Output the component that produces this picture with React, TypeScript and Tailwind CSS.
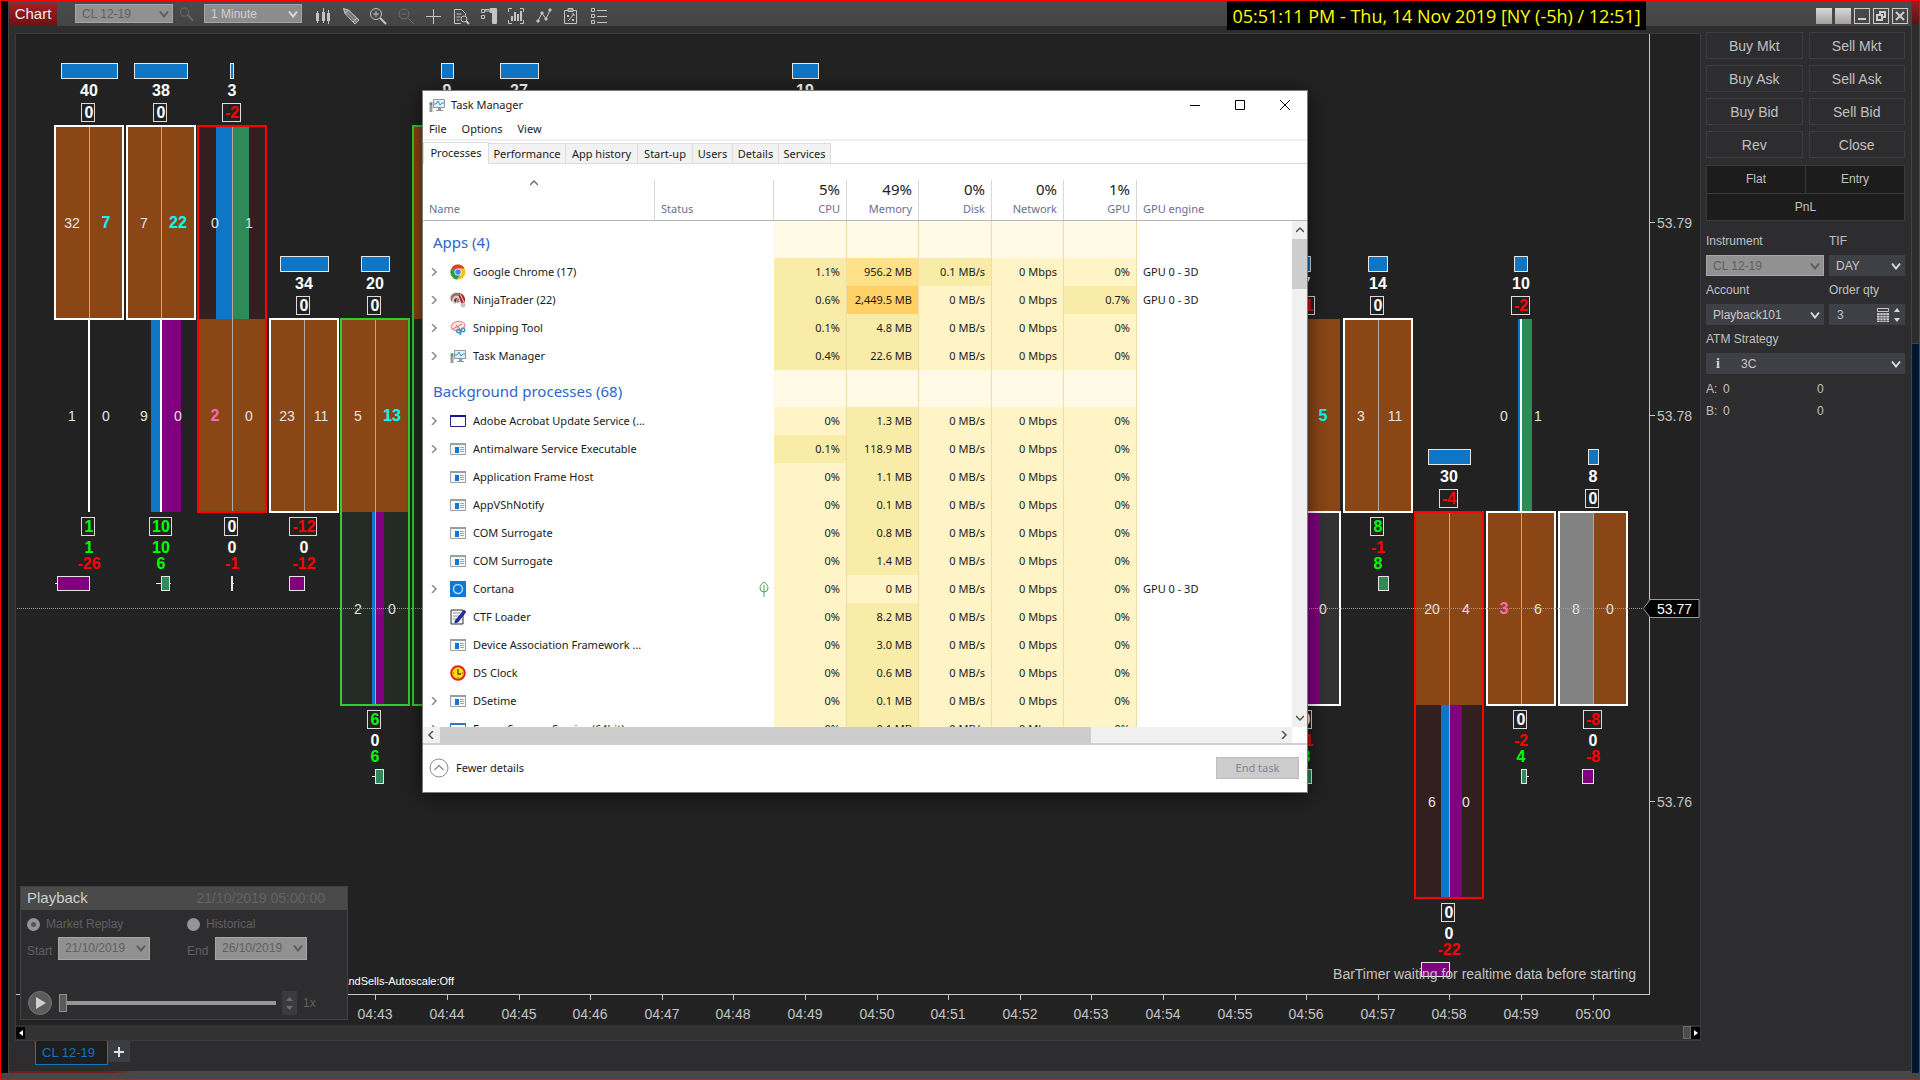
import type { ReactNode } from 'react';
import { clsx } from 'clsx';

// ── Chart data ────────────────────────────────────────────────────────────

const WHITE = '#ffffff';
const RED = '#ff0000';
const LIME = '#00ff00';
const CYAN = '#00ffff';
const PINK = '#ff69b4';
const BROWN = '#8b4616';
const BLUE = '#0f75c5';
const PURPLE = '#800080';
const GREEN = '#2e8b57';
const GREY = '#828282';

interface Cell {
  row: number;
  left: string;
  right: string;
  leftHot?: boolean;
  rightHot?: boolean;
  /** Full-width fills, left and right half */
  fill?: [string, string];
  /** Partial bars around the centre: left width, colour, right width, colour */
  bars?: [number, string, number, string];
  wick?: boolean;
}

interface Candle {
  slot: number;
  total: number;
  top: string;
  start: number;
  end: number;
  cells: Cell[];
  outline?: { color: string; from: number; to: number; bg: string };
  foot?: [string, string, string];
  delta?: number;
  whisker?: [number, number];
}

const SOLID: [string, string] = [BROWN, BROWN];

const CANDLES: Candle[] = [
  {
    slot: 0, total: 40, top: '0', start: 0, end: 2,
    outline: { color: WHITE, from: 0, to: 1, bg: 'none' },
    cells: [
      { row: 0, left: '32', right: '7', rightHot: true, fill: SOLID },
      { row: 1, left: '1', right: '0', wick: true },
    ],
    foot: ['1', '1', '-26'], delta: -32, whisker: [-34, 0],
  },
  {
    slot: 1, total: 38, top: '0', start: 0, end: 2,
    outline: { color: WHITE, from: 0, to: 1, bg: 'none' },
    cells: [
      { row: 0, left: '7', right: '22', rightHot: true, fill: SOLID },
      { row: 1, left: '9', right: '0', bars: [10, BLUE, 20, PURPLE], wick: true },
    ],
    foot: ['10', '10', '6'], delta: 8, whisker: [-5, 10],
  },
  {
    slot: 2, total: 3, top: '-2', start: 0, end: 2,
    outline: { color: RED, from: 0, to: 2, bg: '#331f20' },
    cells: [
      { row: 0, left: '0', right: '1', bars: [16, BLUE, 17, GREEN] },
      { row: 1, left: '2', right: '0', leftHot: true, fill: SOLID },
    ],
    foot: ['0', '0', '-1'], delta: -1, whisker: [0, 2],
  },
  {
    slot: 3, total: 34, top: '0', start: 1, end: 2,
    outline: { color: WHITE, from: 1, to: 2, bg: 'none' },
    cells: [{ row: 1, left: '23', right: '11', fill: SOLID }],
    foot: ['-12', '0', '-12'], delta: -15,
  },
  {
    slot: 4, total: 20, top: '0', start: 1, end: 3,
    outline: { color: '#32cd32', from: 1, to: 3, bg: '#242c24' },
    cells: [
      { row: 1, left: '5', right: '13', rightHot: true, fill: SOLID },
      { row: 2, left: '2', right: '0', bars: [3, BLUE, 9, PURPLE] },
    ],
    foot: ['6', '0', '6'], delta: 8, whisker: [-3, 0],
  },
  {
    slot: 5, total: 9, top: '0', start: 0, end: 3,
    outline: { color: '#32cd32', from: 0, to: 3, bg: '#242c24' },
    cells: [{ row: 0, left: '', right: '', fill: SOLID }],
  },
  { slot: 6, total: 27, top: '0', start: 0, end: 1, cells: [] },
  { slot: 10, total: 19, top: '0', start: 0, end: 1, cells: [] },
  {
    slot: 17, total: 7, top: '-1', start: 1, end: 3,
    outline: { color: WHITE, from: 2, to: 3, bg: '#333333' },
    cells: [
      { row: 1, left: '', right: '5', rightHot: true, fill: SOLID },
      { row: 2, left: '', right: '0', bars: [5, BLUE, 14, PURPLE] },
    ],
    foot: ['0', '-1', '3'], delta: 5,
  },
  {
    slot: 18, total: 14, top: '0', start: 1, end: 2,
    outline: { color: WHITE, from: 1, to: 2, bg: 'none' },
    cells: [{ row: 1, left: '3', right: '11', fill: SOLID }],
    foot: ['8', '-1', '8'], delta: 10,
  },
  {
    slot: 19, total: 30, top: '-4', start: 2, end: 4,
    outline: { color: RED, from: 2, to: 4, bg: '#331f20' },
    cells: [
      { row: 2, left: '20', right: '4', fill: SOLID },
      { row: 3, left: '6', right: '0', bars: [8, BLUE, 13, PURPLE] },
    ],
    foot: ['0', '0', '-22'], delta: -28,
  },
  {
    slot: 20, total: 10, top: '-2', start: 1, end: 3,
    outline: { color: WHITE, from: 2, to: 3, bg: 'none' },
    cells: [
      { row: 1, left: '0', right: '1', bars: [3, BLUE, 11, GREEN], wick: true },
      { row: 2, left: '3', right: '6', leftHot: true, fill: SOLID },
    ],
    foot: ['0', '-2', '4'], delta: 5, whisker: [0, 8],
  },
  {
    slot: 21, total: 8, top: '0', start: 2, end: 3,
    outline: { color: WHITE, from: 2, to: 3, bg: 'none' },
    cells: [{ row: 2, left: '8', right: '0', fill: [GREY, BROWN] }],
    foot: ['-8', '0', '-8'], delta: -11,
  },
];

const TIMES = Array.from({ length: 22 }, (_, i) => {
  const minute = 39 + i;
  return minute < 60 ? `04:${minute}` : '05:00';
});

const PRICES = ['53.79', '53.78', '53.77', '53.76'];

const ROW_H = 193;
const slotX = (slot: number) => Math.round(73 + slot * 71.6);
const rowY = (row: number) => 92 + row * ROW_H;

function tone(value: string) {
  if (value.startsWith('-')) return RED;
  return value === '0' ? WHITE : LIME;
}

// ── Chart ─────────────────────────────────────────────────────────────────

function BoxedValue({ x, y, value, color }: { x: number; y: number; value: string; color: string }) {
  const digits = value.replace('-', '').length;
  const width = digits * 9 + 4 + (value.startsWith('-') ? 5 : 0);
  return (
    <g>
      <rect x={x - Math.ceil(width / 2) - 0.5} y={y + 0.5} width={width} height={18} fill="none" stroke="#dcdcdc" />
      <text x={x} y={y + 15} fill={color} textAnchor="middle">{value}</text>
    </g>
  );
}

function CandleShape({ candle }: { candle: Candle }) {
  const { total, outline, foot, delta, whisker } = candle;
  const c = slotX(candle.slot);
  const top = rowY(candle.start);
  const bottom = rowY(candle.end);
  const barW = Math.round(total * 1.43);

  return (
    <g fontSize={16} fontWeight={700}>
      <rect x={c - Math.floor(barW / 2) + 0.5} y={top - 62.5} width={barW - 1} height={15} fill={BLUE} stroke="#e6e6e6" />
      <text x={c} y={top - 30} fill={WHITE} textAnchor="middle">{total}</text>
      <BoxedValue x={c} y={top - 23} value={candle.top} color={candle.top === '0' ? WHITE : RED} />

      {outline && outline.bg !== 'none' && (
        <rect x={c - 34} y={rowY(outline.from)} width={68} height={(outline.to - outline.from) * ROW_H} fill={outline.bg} />
      )}
      {candle.cells.map(cell => {
        const y = rowY(cell.row);
        return (
          <g key={cell.row}>
            {cell.fill && (
              <>
                <rect x={c - 34} y={y} width={34} height={ROW_H} fill={cell.fill[0]} />
                <rect x={c} y={y} width={34} height={ROW_H} fill={cell.fill[1]} />
              </>
            )}
            {cell.bars && (
              <>
                <rect x={c - cell.bars[0]} y={y} width={cell.bars[0]} height={ROW_H} fill={cell.bars[1]} />
                <rect x={c} y={y} width={cell.bars[2]} height={ROW_H} fill={cell.bars[3]} />
              </>
            )}
            {cell.wick
              ? <rect x={c - 1} y={y} width={2} height={ROW_H} fill={WHITE} />
              : <rect x={c} y={y} width={1} height={ROW_H} fill="#b4a9a0" />}
          </g>
        );
      })}
      {outline && (
        <rect
          x={c - 34} y={rowY(outline.from)} width={68} height={(outline.to - outline.from) * ROW_H}
          fill="none" stroke={outline.color} strokeWidth={2}
        />
      )}
      {candle.cells.map(cell => {
        const y = rowY(cell.row) + 102;
        return (
          <g key={cell.row} fontSize={14} fontWeight={400} fill="#e4e4e4" textAnchor="middle">
            <text
              x={c - 17} y={y}
              {...(cell.leftHot ? { fill: PINK, fontSize: 16, fontWeight: 700 } : {})}
            >
              {cell.left}
            </text>
            <text
              x={c + 17} y={y}
              {...(cell.rightHot ? { fill: CYAN, fontSize: 16, fontWeight: 700 } : {})}
            >
              {cell.right}
            </text>
          </g>
        );
      })}

      {foot && (
        <>
          <BoxedValue x={c} y={bottom + 5} value={foot[0]} color={tone(foot[0])} />
          <text x={c} y={bottom + 41} fill={tone(foot[1])} textAnchor="middle">{foot[1]}</text>
          <text x={c} y={bottom + 57} fill={tone(foot[2])} textAnchor="middle">{foot[2]}</text>
        </>
      )}
      {whisker && (
        <rect x={c + whisker[0]} y={bottom + 71} width={whisker[1] - whisker[0]} height={1} fill={WHITE} />
      )}
      {delta && (
        <rect
          x={delta < 0 ? c + delta + 0.5 : c + 0.5} y={bottom + 64.5}
          width={Math.abs(delta)} height={14}
          fill={delta < 0 ? PURPLE : GREEN} stroke="#e6e6e6"
        />
      )}
    </g>
  );
}

function FootprintChart() {
  return (
    <svg
      viewBox="0 0 1684 991"
      preserveAspectRatio="xMinYMin meet"
      className="block h-full w-full font-['Liberation_Sans',Arial,sans-serif]"
      role="img"
      aria-label="CL 12-19 footprint chart"
    >
      {CANDLES.map(candle => <CandleShape key={candle.slot} candle={candle} />)}

      {/* Last price */}
      <line x1={1} x2={1627} y1={574.5} y2={574.5} stroke="#a0a0a0" strokeDasharray="1 1" />

      {/* Axes */}
      <rect x={1633} y={0} width={1} height={961} fill="#c8c8c8" />
      <rect x={0} y={960} width={1634} height={1} fill="#c8c8c8" />
      <g fontSize={14} fill="#c3c3c3">
        {PRICES.map((price, i) => (
          <g key={price}>
            <rect x={1634} y={188 + i * ROW_H} width={5} height={1} fill="#c8c8c8" />
            {price !== '53.77' && <text x={1641} y={194 + i * ROW_H}>{price}</text>}
          </g>
        ))}
        {TIMES.map((time, i) => (
          <g key={time}>
            <rect x={slotX(i)} y={961} width={1} height={5} fill="#c8c8c8" />
            <text x={slotX(i)} y={985} textAnchor="middle">{time}</text>
          </g>
        ))}
        <path d="M1627.500 574.500 L1634 565.500 H1683 V583.500 H1634 Z" fill="#000" stroke="#9a9a9a" />
        <text x={1641} y={580} fill={WHITE}>53.77</text>
        <text x={1620} y={945} textAnchor="end">BarTimer waiting for realtime data before starting</text>
      </g>
      <text x={438} y={951} fontSize={11} textAnchor="end" fill={WHITE}>AndSells-Autoscale:Off</text>
    </svg>
  );
}

// ── Form controls ─────────────────────────────────────────────────────────

interface DropdownProps {
  id?: string;
  label?: string;
  value: string;
  variant?: 'dark' | 'grey' | 'disabled';
  className?: string;
  inset?: string;
}

function Dropdown({ id, label, value, variant = 'dark', className, inset = 'pl-[6px]' }: DropdownProps) {
  return (
    <div className={clsx('relative', className)}>
      <select
        id={id}
        aria-label={label}
        defaultValue={value}
        className={clsx(
          'block h-full w-full appearance-none border pr-5 text-[12px] leading-4 outline-none',
          inset,
          variant === 'dark' && 'border-[#3f3f46] bg-[#3f3f46] text-[#c8c8c8]',
          variant === 'grey' && 'border-[#a4a4a4] bg-[#8c8c8c] text-[#d0d0d0]',
          variant === 'disabled' && 'border-[#a6a6a6] bg-[#919191] text-[#606060]',
        )}
      >
        <option>{value}</option>
      </select>
      <svg
        viewBox="0 0 10 8"
        className={clsx(
          'pointer-events-none absolute right-1 top-1/2 h-2 w-[10px] -translate-y-1/2',
          variant === 'disabled' ? 'text-[#5c5c5c]' : 'text-[#dadada]',
        )}
        aria-hidden="true"
      >
        <path d="M1 1.500 L5 6.500 L9 1.500" fill="none" stroke="currentColor" strokeWidth={2} />
      </svg>
    </div>
  );
}

// ── Toolbar ───────────────────────────────────────────────────────────────

const TOOLS: { name: string; dim?: boolean; art: ReactNode }[] = [
  {
    name: 'Chart style',
    art: (
      <>
        <path d="M2 6h3v8H2zM8 5h3v9H8zM13 6h3v8h-3z" fill="currentColor" stroke="none" />
        <path d="M3.500 4v12M9.500 1v15M14.500 3v14" />
      </>
    ),
  },
  {
    name: 'Draw',
    art: (
      <>
        <path d="M1.500 1.500l5 1.500L17 13l-4 4L3 6.500z" fill="#8c8c8c" />
        <path d="M5 7.500l9 9M7 5.500l9 9" stroke="#5a5a5a" />
        <path d="M3 6.500l3.500-3.500M11 15l4-4" />
      </>
    ),
  },
  {
    name: 'Zoom in',
    art: <><circle cx={7} cy={7} r={5.5} /><path d="M4 7h6M7 4v6" /><path d="M11 11l6 6" strokeWidth={2} /></>,
  },
  {
    name: 'Zoom out',
    dim: true,
    art: <><circle cx={7} cy={7} r={5} /><path d="M4.500 7h5M11 11l6 6" /></>,
  },
  { name: 'Crosshair', art: <path d="M9.500 2v15M2 9.500h15" /> },
  {
    name: 'Data box',
    art: (
      <>
        <path d="M9 16.500H2.500v-14h7l4 4v2M4.500 7h5M4.500 10h4M4.500 13h3" />
        <circle cx={12} cy={12} r={3} /><path d="M14 14l3 3" strokeWidth={2} />
      </>
    ),
  },
  {
    name: 'Chart trader',
    art: (
      <>
        <path d="M1.500 2.500h3v3h-3zM1.500 8.500h3v3h-3zM5 4h6M5 2.500h4" />
        <path d="M12.500 1.500h4v15h-4zM10 1.500h3v4h-3z" fill="currentColor" />
      </>
    ),
  },
  {
    name: 'Data series',
    art: (
      <>
        <path d="M1.500 5V1.500H5M13 1.500h3.500V5M16.500 13v3.500H13M5 16.500H1.500V13" />
        <path d="M5 9v5M8 5v9M11 7v7M14 4v10" strokeWidth={2} />
      </>
    ),
  },
  {
    name: 'Indicators',
    art: (
      <>
        <path d="M3 14L7 6l4 6 4-9" />
        <path d="M2 13h2v2H2zM6 5h2v2H6zM10 11h2v2h-2zM14 2h2v2h-2z" fill="currentColor" />
      </>
    ),
  },
  {
    name: 'Strategies',
    art: (
      <>
        <path d="M2.500 3.500h12v13h-12z" /><path d="M6 1.500h5v3H6z" fill="#8a8a8a" />
        <path d="M5 8l2 2M7 8l-2 2M10 7h2v2M12 7L6 14M10 12l2 2M12 12l-2 2" />
      </>
    ),
  },
  {
    name: 'Properties',
    art: <path d="M1.500 1.500h3v3h-3zM1.500 7.500h3v3h-3zM1.500 13.500h3v3h-3zM7 3.500h10M7 9.500h10M7 15.500h10" />,
  },
];

function TitleBar() {
  return (
    <header className="flex h-[25px] items-center bg-linear-to-b from-[#4b4b4b] to-[#444444] pr-[3px]">
      <h1 className="mt-[2px] flex h-[23px] w-12 items-center justify-center bg-linear-to-b from-[#a51f27] to-[#6b1116] text-[15px] text-[#ececec]">
        Chart
      </h1>
      <Dropdown label="Instrument" value="CL 12-19" variant="disabled" className="ml-[18px] h-[19px] w-[98px]" />
      <svg viewBox="0 0 16 16" className="ml-[6px] h-4 w-[15px] text-[#6a6a6a]" aria-hidden="true">
        <g fill="none" stroke="currentColor"><circle cx={6} cy={6} r={4.5} /><path d="M9 9l6 6" strokeWidth={2} /></g>
      </svg>
      <Dropdown label="Interval" value="1 Minute" variant="grey" className="ml-[10px] h-[19px] w-[98px]" />
      <div className="ml-3 mt-1 flex w-[294px] items-center justify-between">
        {TOOLS.map(tool => (
          <button key={tool.name} type="button" aria-label={tool.name} className={tool.dim ? 'text-[#6e6e6e]' : 'text-[#c4c4c4]'}>
            <svg viewBox="0 0 18 18" className="h-[18px] w-[18px]" fill="none" stroke="currentColor">
              {tool.art}
            </svg>
          </button>
        ))}
      </div>
      <div className="ml-auto mt-1 flex gap-[3px]">
        <button type="button" aria-label="Link instrument" className="h-4 w-4 bg-linear-to-b from-[#d8d8d8] to-[#a5a0a0]" />
        <button type="button" aria-label="Link interval" className="h-4 w-4 bg-linear-to-b from-[#d8d8d8] to-[#a5a0a0]" />
        <WindowButton label="Minimise"><path d="M4 11h8" strokeWidth={2} /></WindowButton>
        <WindowButton label="Restore">
          <path d="M7 7V4h5v5H9M4 7h5v5H4z" strokeWidth={2} />
        </WindowButton>
        <WindowButton label="Close"><path d="M4 4l8 8M12 4l-8 8" strokeWidth={2} /></WindowButton>
      </div>
    </header>
  );
}

function WindowButton({ label, children }: { label: string; children: ReactNode }) {
  return (
    <button type="button" aria-label={label} className="h-4 w-4 text-[#cdcdcd]">
      <svg viewBox="0 0 16 16" className="h-4 w-4" fill="none" stroke="currentColor">
        <rect x={0.5} y={0.5} width={15} height={15} />
        {children}
      </svg>
    </button>
  );
}

// ── Playback ──────────────────────────────────────────────────────────────

function PlaybackPanel() {
  return (
    <section className="absolute bottom-[5px] left-[4px] flex h-[134px] w-[328px] flex-col border border-[#414144] bg-[#2d2d30] text-[12px] text-[#606060]">
      <div className="flex h-[23px] items-center justify-between bg-[#4a4a4a] pl-[6px] pr-[22px]">
        <h2 className="text-[15px] text-[#cfcfcf]">Playback</h2>
        <span className="text-[14px] text-[#626262]">21/10/2019 05:00:00</span>
      </div>
      <div className="mt-[5px] grid h-4 grid-cols-[160px_1fr] pl-[6px]">
        <label className="flex items-center gap-[6px]">
          <input type="radio" name="source" defaultChecked className="h-[13px] w-[13px] appearance-none rounded-full border-4 border-[#959595] bg-[#555555]" />
          Market Replay
        </label>
        <label className="flex items-center gap-[6px]">
          <input type="radio" name="source" className="h-[13px] w-[13px] appearance-none rounded-full bg-[#959595]" />
          Historical
        </label>
      </div>
      <div className="mt-[5px] grid grid-cols-[160px_1fr] pl-[6px]">
        <div className="flex items-center gap-[3px]">
          <label htmlFor="start" className="w-7 pt-[6px]">Start</label>
          <Dropdown id="start" value="21/10/2019" variant="disabled" className="h-[23px] w-[92px]" />
        </div>
        <div className="flex items-center gap-1">
          <label htmlFor="end" className="w-6 pt-[6px]">End</label>
          <Dropdown id="end" value="26/10/2019" variant="disabled" className="h-[23px] w-[92px]" />
        </div>
      </div>
      <div className="mt-auto flex items-center pb-1 pl-[7px]">
        <button type="button" aria-label="Play" className="flex h-6 w-6 items-center justify-center rounded-full border border-[#737373] bg-[#5c5c5c]">
          <svg viewBox="0 0 10 12" className="ml-[2px] h-3 w-[10px]"><path d="M0 0l10 6-10 6z" fill="#d0d0d0" /></svg>
        </button>
        <input
          type="range"
          aria-label="Playback position"
          defaultValue={0}
          className="
            ml-[7px] h-5 w-[217px] appearance-none bg-transparent
            [&::-webkit-slider-runnable-track]:h-1 [&::-webkit-slider-runnable-track]:bg-[#959595]
            [&::-webkit-slider-thumb]:-mt-[7px] [&::-webkit-slider-thumb]:h-[18px] [&::-webkit-slider-thumb]:w-2
            [&::-webkit-slider-thumb]:appearance-none [&::-webkit-slider-thumb]:border
            [&::-webkit-slider-thumb]:border-[#8f8f8f] [&::-webkit-slider-thumb]:bg-[#5a5a5a]
          "
        />
        <span className="ml-[6px] flex h-6 w-[15px] flex-col items-center justify-center gap-[5px] bg-[#3a3a40]">
          <svg viewBox="0 0 7 4" className="h-1 w-[7px]"><path d="M0 4l3.500-4L7 4z" fill="#6b6b6b" /></svg>
          <svg viewBox="0 0 7 4" className="h-1 w-[7px]"><path d="M0 0l3.500 4L7 0z" fill="#6b6b6b" /></svg>
        </span>
        <span className="ml-[6px]">1x</span>
      </div>
    </section>
  );
}

// ── Order entry ───────────────────────────────────────────────────────────

const ORDER_BUTTONS = ['Buy Mkt', 'Sell Mkt', 'Buy Ask', 'Sell Ask', 'Buy Bid', 'Sell Bid', 'Rev', 'Close'];

function OrderPanel() {
  return (
    <aside className="w-[210px] shrink-0 pl-[5px] pr-[6px] pt-[6px] text-[12px] leading-4 text-[#c0c0c0]">
      <div className="grid grid-cols-2 gap-[6px]">
        {ORDER_BUTTONS.map(name => (
          <button key={name} type="button" className="h-[27px] border border-[#3d3d40] text-[14px]">{name}</button>
        ))}
      </div>
      <div className="mt-[7px] grid h-14 grid-cols-2 gap-px border border-[#3a3a3c] bg-[#3a3a3c] text-center">
        <div className="flex items-center justify-center bg-[#1c1c1c]">Flat</div>
        <div className="flex items-center justify-center bg-[#1c1c1c]">Entry</div>
        <div className="col-span-2 flex items-center justify-center bg-[#1c1c1c]">PnL</div>
      </div>
      <div className="mt-3 grid grid-cols-[118px_minmax(0,1fr)] gap-x-[5px]">
        <label htmlFor="instrument" className="mb-[6px]">Instrument</label>
        <label htmlFor="tif">TIF</label>
        <Dropdown id="instrument" value="CL 12-19" variant="disabled" className="h-[21px]" />
        <Dropdown id="tif" value="DAY" className="h-[21px]" />
        <label htmlFor="account" className="mb-[6px] mt-[6px]">Account</label>
        <label htmlFor="qty" className="mt-[6px]">Order qty</label>
        <Dropdown id="account" value="Playback101" className="h-[21px]" />
        <div className="flex h-[21px] items-center bg-[#3f3f46] pr-1">
          <input id="qty" type="text" defaultValue="3" className="min-w-0 flex-1 bg-transparent pl-2 outline-none" />
          <svg viewBox="0 0 12 14" className="h-[14px] w-3 shrink-0" aria-hidden="true">
            <path d="M0.500 0.500h11v3h-11z" fill="none" stroke="#c8c8c8" />
            <path d="M0 5h12v9H0z" fill="#c8c8c8" />
            <path d="M0 7.500h12M0 10h12M0 12.500h12M3 5v9M6 5v9M9 5v9" stroke="#3f3f46" strokeWidth={0.6} />
          </svg>
          <svg viewBox="0 0 8 14" className="ml-1 h-[14px] w-2 shrink-0" aria-hidden="true">
            <path d="M1 4l3-4 3 4zM1 10l3 4 3-4z" fill="#d8d8d8" />
          </svg>
        </div>
      </div>
      <label htmlFor="atm" className="my-[6px] block">ATM Strategy</label>
      <div className="flex h-[21px] bg-[#3f3f46]">
        <span className="flex w-6 items-center justify-center font-['Liberation_Serif',serif] text-[14px] font-bold text-[#d8d8d8]">i</span>
        <Dropdown id="atm" value="3C" className="flex-1" inset="pl-[10px]" />
      </div>
      <div className="mt-[7px] grid grid-cols-[17px_94px_1fr] gap-y-[6px]">
        <span>A:</span><span>0</span><span>0</span>
        <span>B:</span><span>0</span><span>0</span>
      </div>
    </aside>
  );
}

// ── Task Manager ──────────────────────────────────────────────────────────

type IconName = 'chrome' | 'ninja' | 'snip' | 'taskmgr' | 'window' | 'exe' | 'cortana' | 'ctf' | 'clock' | 'epson';

const ICONS: Record<IconName, ReactNode> = {
  chrome: (
    <>
      <circle cx={8} cy={8} r={7.5} fill="#fbc116" />
      <path d="M8 8L1.500 4.200A7.500 7.500 0 0 1 14.500 4.500H8z" fill="#e33b2e" />
      <path d="M1.500 4.200A7.500 7.500 0 0 0 7 15.500L10.500 10 8 8z" fill="#2b9c49" />
      <circle cx={8} cy={8} r={3.6} fill="#fff" />
      <circle cx={8} cy={8} r={2.8} fill="#4285f4" />
    </>
  ),
  ninja: (
    <>
      <path d="M1 9C-1 4 3 0 8 1c5 0 8 4 7 9l-3 4-2-4-4 1z" fill="#9c6f6b" />
      <path d="M2 9C2 5 5 3 8 4l-1 7-3 1z" fill="#d9cbc7" />
      <path d="M4 9c0-2 1-3 3-3l-1 5z" fill="#5d3a36" />
      <path d="M9 1c4 1 6 4 6 8l-3 3L9 6z" fill="#b01e26" />
      <path d="M10 2l4 8M8 4l3 8" stroke="#f3e4e4" />
      <circle cx={13} cy={13} r={2.5} fill="#c3c3c3" />
    </>
  ),
  snip: (
    <>
      <ellipse cx={8} cy={6} rx={7} ry={4.5} fill="#fbe3e3" stroke="#e87d7d" transform="rotate(-12 8 6)" />
      <path d="M3 9l9-5M6 5l6 6" stroke="#c96a6a" />
      <circle cx={8.5} cy={11} r={1.8} fill="none" stroke="#3d96cf" strokeWidth={1.4} />
      <circle cx={13} cy={10} r={1.8} fill="none" stroke="#3d96cf" strokeWidth={1.4} />
      <path d="M11 11l-1 4" stroke="#3d96cf" strokeWidth={1.500} />
    </>
  ),
  taskmgr: (
    <>
      <path d="M0.500 5h3v10h-3z" fill="#9b9b9b" />
      <path d="M1 6h2v2H1z" fill="#35a835" />
      <path d="M4.500 2.500h11v8h-11z" fill="#dff1fb" stroke="#8f979c" />
      <path d="M5 7h2l2-3 2 4 2-2h2" fill="none" stroke="#2a93cf" />
      <path d="M9 11h3v2h2v1H7v-1h2z" fill="#8f979c" />
    </>
  ),
  window: (
    <>
      <path d="M0.500 2.500h15v11h-15z" fill="#fff" stroke="#23238f" />
      <path d="M0 2h16v2H0z" fill="#15159c" />
    </>
  ),
  exe: (
    <>
      <path d="M0.500 2.500h15v11h-15z" fill="#f5f5f5" stroke="#9a9fa3" />
      <path d="M0 2h16v2H0z" fill="#9a9fa3" />
      <path d="M5 6h4v6H5z" fill="#0b7ad6" />
      <path d="M10 6.500h4M10 8.500h4M10 10.500h4" stroke="#a9a9a9" />
    </>
  ),
  cortana: (
    <>
      <path d="M0 0h16v16H0z" fill="#0f78d7" />
      <circle cx={8} cy={8} r={4.5} fill="none" stroke="#a6dcff" strokeWidth={1.500} />
    </>
  ),
  ctf: (
    <>
      <path d="M1 1h12v14H1z" fill="#f3f3f3" stroke="#333" />
      <path d="M3 4h8M3 7h6M3 10h4" stroke="#9a9a9a" />
      <path d="M5 12L14 1l2 2-8 10-3 1z" fill="#1b2bb0" stroke="#111a55" strokeWidth={0.600} />
    </>
  ),
  clock: (
    <>
      <circle cx={8} cy={8} r={6.8} fill="#ffe400" stroke="#e3201b" strokeWidth={2} />
      <path d="M8 4v5h3" fill="none" stroke="#7a2a00" strokeWidth={1.300} />
      <path d="M3 8h1M12 8h1M8 12v1" stroke="#7a2a00" />
    </>
  ),
  epson: (
    <>
      <path d="M0.500 2.500h15v11h-15z" fill="#fff" stroke="#2d7ac0" />
      <path d="M0 2h16v2H0z" fill="#2d7ac0" />
    </>
  ),
};

function AppIcon({ name }: { name: IconName }) {
  return <svg viewBox="0 0 16 16" className="h-4 w-4 shrink-0" aria-hidden="true">{ICONS[name]}</svg>;
}

interface Process {
  name: string;
  icon: IconName;
  expand?: boolean;
  cpu?: string;
  memory: string;
  disk?: string;
  gpu?: string;
  engine?: string;
  leaf?: boolean;
}

const GROUPS: { title: string; processes: Process[] }[] = [
  {
    title: 'Apps (4)',
    processes: [
      { name: 'Google Chrome (17)', icon: 'chrome', expand: true, cpu: '1.1%', memory: '956.2 MB', disk: '0.1 MB/s', engine: 'GPU 0 - 3D' },
      { name: 'NinjaTrader (22)', icon: 'ninja', expand: true, cpu: '0.6%', memory: '2,449.5 MB', gpu: '0.7%', engine: 'GPU 0 - 3D' },
      { name: 'Snipping Tool', icon: 'snip', expand: true, cpu: '0.1%', memory: '4.8 MB' },
      { name: 'Task Manager', icon: 'taskmgr', expand: true, cpu: '0.4%', memory: '22.6 MB' },
    ],
  },
  {
    title: 'Background processes (68)',
    processes: [
      { name: 'Adobe Acrobat Update Service (...', icon: 'window', expand: true, memory: '1.3 MB' },
      { name: 'Antimalware Service Executable', icon: 'exe', expand: true, cpu: '0.1%', memory: '118.9 MB' },
      { name: 'Application Frame Host', icon: 'exe', memory: '1.1 MB' },
      { name: 'AppVShNotify', icon: 'exe', memory: '0.1 MB' },
      { name: 'COM Surrogate', icon: 'exe', memory: '0.8 MB' },
      { name: 'COM Surrogate', icon: 'exe', memory: '1.4 MB' },
      { name: 'Cortana', icon: 'cortana', expand: true, memory: '0 MB', engine: 'GPU 0 - 3D', leaf: true },
      { name: 'CTF Loader', icon: 'ctf', memory: '8.2 MB' },
      { name: 'Device Association Framework ...', icon: 'exe', memory: '3.0 MB' },
      { name: 'DS Clock', icon: 'clock', memory: '0.6 MB' },
      { name: 'DSetime', icon: 'exe', expand: true, memory: '0.1 MB' },
      { name: 'Epson Scanner Service (64bit)', icon: 'epson', expand: true, memory: '0.1 MB' },
    ],
  },
];

const METRICS = [
  { label: 'CPU', load: '5%' },
  { label: 'Memory', load: '49%' },
  { label: 'Disk', load: '0%' },
  { label: 'Network', load: '0%' },
  { label: 'GPU', load: '1%' },
];

function heat(value: string) {
  const n = parseFloat(value.replace(',', ''));
  if (n > 2000) return 'bg-[#ffd065]';
  if (n > 500) return 'bg-[#ffe287]';
  return n > 0 ? 'bg-[#f9eca8]' : 'bg-[#fff4c6]';
}

function Chevron({ className, d }: { className?: string; d: string }) {
  return (
    <svg viewBox="0 0 8 8" className={clsx('h-2 w-2 shrink-0', className)} aria-hidden="true">
      <path d={d} fill="none" stroke="currentColor" strokeWidth={1.500} />
    </svg>
  );
}

function ProcessRow({ process }: { process: Process }) {
  const { name, icon, expand, cpu = '0%', memory, disk = '0 MB/s', gpu = '0%', engine, leaf } = process;
  return (
    <tr className="h-7">
      <th scope="row" className="p-0 text-left font-normal">
        <div className="flex items-center pl-[7px]">
          <button type="button" aria-label={`Expand ${name}`} className={clsx('mr-3 w-2', !expand && 'invisible')}>
            <Chevron d="M2 0l4 4-4 4" className="text-[#8a8a8a]" />
          </button>
          <AppIcon name={icon} />
          <span className="ml-[7px] whitespace-nowrap">{name}</span>
        </div>
      </th>
      <td className="p-0">
        {leaf && (
          <svg viewBox="0 0 10 16" className="ml-auto mr-[5px] h-4 w-[10px]" aria-label="Suspended">
            <path d="M5 16V4M5 1C2 3 1 5 1 7a4 4 0 0 0 8 0c0-2-1-4-4-6z" fill="none" stroke="#4fa552" />
          </svg>
        )}
      </td>
      {[cpu, memory, disk, '0 Mbps', gpu].map((value, i) => (
        <td key={METRICS[i].label} className={clsx('border-r border-[#f0dca6] p-0 pr-[6px] text-right', heat(value))}>
          {value}
        </td>
      ))}
      <td className="p-0 pl-[6px]">{engine}</td>
    </tr>
  );
}

function TaskManager() {
  return (
    <section
      aria-label="Task Manager"
      className="
        absolute left-[421px] top-[89px] flex h-[703px] w-[886px] flex-col border border-[#7a7a7a]
        bg-white font-['Noto_Sans','Open_Sans',sans-serif] text-[11px] leading-4 text-[#1a1a1a]
        shadow-[0_4px_20px_rgba(0,0,0,0.6)]
      "
    >
      <div className="flex h-7 items-center pl-[6px]">
        <AppIcon name="taskmgr" />
        <h2 className="ml-[6px]">Task Manager</h2>
        <div className="ml-auto flex pr-[17px] text-black">
          <button type="button" aria-label="Minimise" className="mr-[35px]">
            <svg viewBox="0 0 10 10" className="h-[10px] w-[10px]"><path d="M0 5.500h10" stroke="currentColor" /></svg>
          </button>
          <button type="button" aria-label="Maximise" className="mr-[35px]">
            <svg viewBox="0 0 10 10" className="h-[10px] w-[10px]"><path d="M0.500 0.500h9v9h-9z" fill="none" stroke="currentColor" /></svg>
          </button>
          <button type="button" aria-label="Close">
            <svg viewBox="0 0 10 10" className="h-[10px] w-[10px]"><path d="M0 0l10 10M10 0L0 10" stroke="currentColor" /></svg>
          </button>
        </div>
      </div>

      <nav className="flex h-[22px] items-center gap-[15px] border-b-2 border-[#f0f0f0] pl-[6px]">
        <button type="button">File</button>
        <button type="button">Options</button>
        <button type="button">View</button>
      </nav>

      <div role="tablist" className="flex h-[23px] items-end border-b border-[#dcdcdc]">
        <button type="button" role="tab" aria-selected="true" className="-mb-px h-[22px] w-[66px] border-x border-t border-[#dcdcdc] bg-white pb-[2px]">Processes</button>
        <button type="button" role="tab" className="h-5 w-[77px] border-r border-t border-[#dcdcdc] bg-[#f2f2f2]">Performance</button>
        <button type="button" role="tab" className="h-5 w-[72px] border-r border-t border-[#dcdcdc] bg-[#f2f2f2]">App history</button>
        <button type="button" role="tab" className="h-5 w-[55px] border-r border-t border-[#dcdcdc] bg-[#f2f2f2]">Start-up</button>
        <button type="button" role="tab" className="h-5 w-10 border-r border-t border-[#dcdcdc] bg-[#f2f2f2]">Users</button>
        <button type="button" role="tab" className="h-5 w-[46px] border-r border-t border-[#dcdcdc] bg-[#f2f2f2]">Details</button>
        <button type="button" role="tab" className="h-5 w-[52px] border-r border-t border-[#dcdcdc] bg-[#f2f2f2]">Services</button>
      </div>

      <div className="relative flex min-h-0 flex-1 overflow-hidden">
        <table className="w-full table-fixed border-separate border-spacing-0 self-start">
          <colgroup>
            <col className="w-[232px]" />
            <col className="w-[119px]" />
            <col className="w-[73px]" />
            <col className="w-[72px]" />
            <col className="w-[73px]" />
            <col className="w-[72px]" />
            <col className="w-[73px]" />
            <col />
          </colgroup>
          <thead>
            <tr className="h-[57px] align-bottom text-[#66728c]">
              <th scope="col" className="border-b border-[#b4b4b4] bg-linear-to-r from-[#d8d8d8] to-[#d8d8d8] bg-size-[1px_40px] bg-right-bottom bg-no-repeat p-0 pb-[3px] pl-[6px] text-left font-normal">
                <Chevron d="M0 6l4-4 4 4" className="mb-[14px] ml-[101px]" />
                Name
              </th>
              <th scope="col" className="border-b border-[#b4b4b4] bg-linear-to-r from-[#d8d8d8] to-[#d8d8d8] bg-size-[1px_40px] bg-right-bottom bg-no-repeat p-0 pb-[3px] pl-[6px] text-left font-normal">
                Status
              </th>
              {METRICS.map(metric => (
                <th
                  key={metric.label}
                  scope="col"
                  className="border-b border-[#b4b4b4] bg-linear-to-r from-[#d8d8d8] to-[#d8d8d8] bg-size-[1px_40px] bg-right-bottom bg-no-repeat p-0 pb-[3px] pr-[7px] text-right font-normal"
                >
                  <span className="block text-[15px] leading-6 text-[#222222]">{metric.load}</span>
                  {metric.label}
                </th>
              ))}
              <th scope="col" className="border-b border-[#b4b4b4] p-0 pb-[3px] pl-[6px] text-left font-normal">GPU engine</th>
            </tr>
          </thead>
          {GROUPS.map(group => (
            <tbody key={group.title}>
              <tr className="h-[37px]">
                <th scope="rowgroup" colSpan={2} className="p-0 pl-[10px] pt-1 text-left text-[15px] font-normal text-[#2f66cc]">
                  {group.title}
                </th>
                {METRICS.map(metric => (
                  <td key={metric.label} className="border-r border-[#f0dca6] bg-[#fff9e5] p-0" />
                ))}
                <td className="p-0" />
              </tr>
              {group.processes.map((process, i) => <ProcessRow key={i} process={process} />)}
            </tbody>
          ))}
        </table>
        {/* Scroll bar over the right edge of the list */}
        <div className="absolute bottom-0 right-0 top-[57px] flex w-[15px] flex-col items-center bg-[#f0f0f0] text-[#505050]">
          <Chevron d="M0 6l4-4 4 4" className="my-[5px]" />
          <div className="h-[50px] w-full bg-[#cdcdcd]" />
          <Chevron d="M0 2l4 4 4-4" className="mb-[5px] mt-auto" />
        </div>
      </div>

      <div className="flex h-4 shrink-0 items-center bg-[#f0f0f0] text-[#505050]">
        <Chevron d="M6 0L2 4l4 4" className="ml-1 mr-[5px]" />
        <div className="h-full w-[651px] bg-[#cdcdcd]" />
        <Chevron d="M2 0l4 4-4 4" className="ml-auto mr-1" />
        <div className="h-full w-[15px] bg-white" />
      </div>

      <footer className="flex h-[49px] shrink-0 items-center justify-between border-t-2 border-[#cfcfcf] pb-[2px] pl-[6px] pr-2">
        <button type="button" className="flex items-center gap-[7px]">
          <svg viewBox="0 0 20 20" className="h-5 w-5" fill="none" aria-hidden="true">
            <circle cx={10} cy={10} r={9} stroke="#8c8c8c" />
            <path d="M5.500 12l4.500-4.500 4.500 4.500" stroke="#8c8c8c" strokeWidth={1.300} />
          </svg>
          Fewer details
        </button>
        <button type="button" disabled className="h-[22px] w-[83px] border border-[#bdbdbd] bg-[#cccccc] text-[#83839b]">
          End task
        </button>
      </footer>
    </section>
  );
}

// ── App ───────────────────────────────────────────────────────────────────

export default function App() {
  return (
    <div className="relative flex h-screen flex-col overflow-hidden border border-[#ff0000] bg-black font-['Liberation_Sans',Arial,sans-serif]">
      <div className="flex min-h-0 flex-1">
        <div className="w-[7px] shrink-0" />
        <main className="flex min-w-0 flex-1 flex-col border-x border-[#444447] bg-[#2d2d30]">
          <TitleBar />
          <div className="flex min-h-0 flex-1">
            <div className="flex min-w-0 flex-1 flex-col pl-[6px] pt-[7px]">
              <div className="flex min-h-0 flex-1 flex-col border border-[#3b3b3e]">
                <div className="relative min-h-0 flex-1 bg-[#222222]">
                  <FootprintChart />
                  <PlaybackPanel />
                </div>
                <div className="flex h-[15px] shrink-0 items-center bg-[#323232]">
                  <button type="button" aria-label="Scroll left" className="flex h-3 w-[9px] items-center justify-center bg-black">
                    <svg viewBox="0 0 4 6" className="h-[6px] w-1"><path d="M4 0v6L0 3z" fill="#fff" /></svg>
                  </button>
                  <div className="ml-auto h-[13px] w-2 border border-[#6a6a6a] bg-[#4c4c4c]" />
                  <button type="button" aria-label="Scroll right" className="flex h-3 w-[9px] items-center justify-center bg-black">
                    <svg viewBox="0 0 4 6" className="h-[6px] w-1"><path d="M0 0v6l4-3z" fill="#fff" /></svg>
                  </button>
                </div>
              </div>
              <div className="flex h-[30px] shrink-0 items-start pl-5">
                <button type="button" className="h-6 w-[73px] border-x border-b border-[#0f75c5] bg-[#1e1e1e] pr-[6px] text-[13px] text-[#0f75c5]">
                  CL 12-19
                </button>
                <button type="button" aria-label="New tab" className="flex h-[21px] w-[22px] items-center justify-center bg-[#3c3c43]">
                  <svg viewBox="0 0 10 10" className="h-[10px] w-[10px]"><path d="M5 0v10M0 5h10" stroke="#e0e0e0" strokeWidth={2} /></svg>
                </button>
              </div>
            </div>
            <OrderPanel />
          </div>
          <div className="h-[2px] shrink-0 bg-[#48484a]">
            <div className="h-full w-[125px] bg-linear-to-r from-[#7c181d] from-80% to-transparent" />
          </div>
        </main>
        {/* Neighbouring window and desktop at the right edge */}
        <div className="flex w-[7px] shrink-0 flex-col bg-[#001533]">
          <div className="h-[23px] bg-linear-to-b from-[#9b1d25] to-[#5e1014]" />
          <div className="h-[320px] border-b border-[#444447] bg-[#2d2d30]" />
        </div>
      </div>
      <div className="h-[6px] shrink-0 bg-[#474749]" />

      <p className="absolute right-[273px] top-0 flex h-[29px] w-[419px] items-center justify-center whitespace-nowrap bg-black pt-[2px] font-['Open_Sans','Noto_Sans',sans-serif] text-[18px] text-[#ffff00]">
        05:51:11 PM - Thu, 14 Nov 2019 [NY (-5h) / 12:51]
      </p>
      <TaskManager />
    </div>
  );
}
